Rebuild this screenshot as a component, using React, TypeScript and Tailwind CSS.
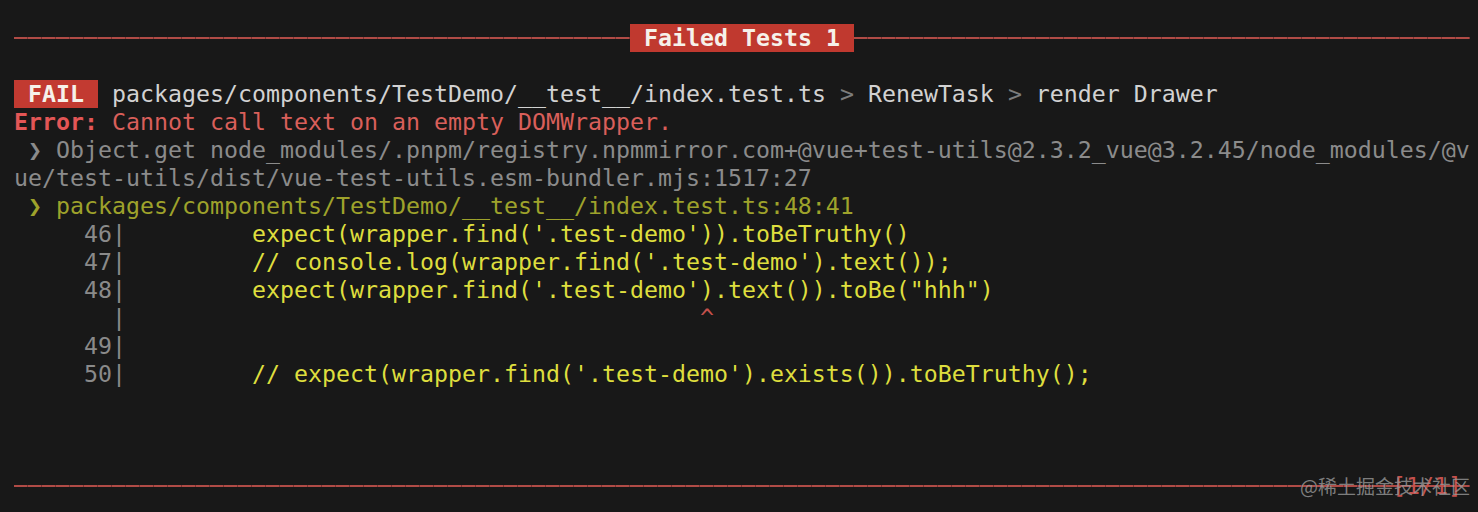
import React from 'react';

const mono = { fontFamily: '"DejaVu Sans Mono", "Liberation Mono", monospace' };

function Rule({ className = '' }: { className?: string }) {
  return (
    <div
      className={`h-[2px] bg-[repeating-linear-gradient(90deg,#b04b46_0px,#b04b46_13px,#7c3532_13px,#7c3532_14px)] ${className}`}
    />
  );
}

function Arrow() {
  return <span className="inline-block w-[14px] text-center">❯</span>;
}

function Gutter({ n }: { n?: string }) {
  return (
    <span className="text-[#8a8a8a]">
      {n ? `     ${n}` : '       '}|
    </span>
  );
}

export default function App() {
  return (
    <div
      className="w-[1478px] h-[512px] bg-[#181818] pt-[24px] pl-[14px] text-[23.25px] leading-[28px] whitespace-pre overflow-hidden"
      style={mono}
    >
      {/* header */}
      <div className="flex items-center h-[28px] w-[1456px]">
        <Rule className="flex-1" />
        <span className="bg-[#c0392f] text-[#f6f1ea] font-bold h-[28px]"> Failed Tests 1 </span>
        <Rule className="flex-1" />
      </div>
      <div className="h-[28px]" />

      <div className="h-[28px]">
        <span className="bg-[#c23a31] text-[#f6f1ea] font-bold inline-block h-[28px]"> FAIL </span>
        <span className="text-[#d2d2d2]"> packages/components/TestDemo/__test__/index.test.ts </span>
        <span className="text-[#7c7c7c]">&gt;</span>
        <span className="text-[#d2d2d2]"> RenewTask </span>
        <span className="text-[#7c7c7c]">&gt;</span>
        <span className="text-[#d2d2d2]"> render Drawer</span>
      </div>
      <div className="h-[28px]">
        <span className="text-[#e35656] font-bold">Error:</span>
        <span className="text-[#d95f5a]"> Cannot call text on an empty DOMWrapper.</span>
      </div>
      <div className="h-[28px] text-[#8b8b8b]">
        {' '}<Arrow />{' Object.get node_modules/.pnpm/registry.npmmirror.com+@vue+test-utils@2.3.2_vue@3.2.45/node_modules/@v'}
      </div>
      <div className="h-[28px] text-[#8b8b8b]">ue/test-utils/dist/vue-test-utils.esm-bundler.mjs:1517:27</div>
      <div className="h-[28px] text-[#9ea22b]">
        {' '}<Arrow />{' packages/components/TestDemo/__test__/index.test.ts:48:41'}
      </div>

      <div className="h-[28px]">
        <Gutter n="46" />
        <span className="text-[#dede3e]">{"         expect(wrapper.find('.test-demo')).toBeTruthy()"}</span>
      </div>
      <div className="h-[28px]">
        <Gutter n="47" />
        <span className="text-[#dede3e]">{"         // console.log(wrapper.find('.test-demo').text());"}</span>
      </div>
      <div className="h-[28px]">
        <Gutter n="48" />
        <span className="text-[#dede3e]">{'         expect(wrapper.find(\'.test-demo\').text()).toBe("hhh")'}</span>
      </div>
      <div className="h-[28px]">
        <Gutter />
        <span className="text-[#c4504c]">{'                                         ^'}</span>
      </div>
      <div className="h-[28px]">
        <Gutter n="49" />
      </div>
      <div className="h-[28px]">
        <Gutter n="50" />
        <span className="text-[#dede3e]">{"         // expect(wrapper.find('.test-demo').exists()).toBeTruthy();"}</span>
      </div>

      <div className="h-[84px]" />

      {/* footer */}
      <div className="relative flex items-center h-[28px] w-[1456px]">
        <Rule className="flex-1" />
        <span className="absolute left-[1378px] top-0 text-[#c4504c]">[1/1]</span>
        <span
          className="absolute left-[1286px] top-[2px] text-[19px] leading-[24px] text-[#9a9a9a]/80"
          style={{ fontFamily: '"Noto Sans CJK SC", "Noto Sans", sans-serif' }}
        >
          @稀土掘金技术社区
        </span>
      </div>
    </div>
  );
}
